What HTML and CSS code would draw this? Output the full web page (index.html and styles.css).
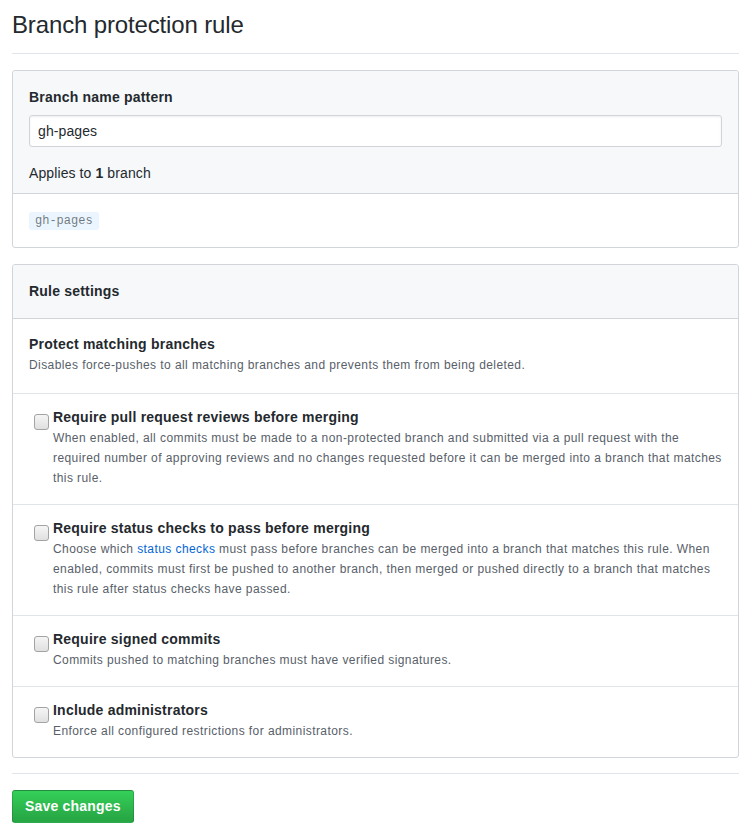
FILE: index.html
```html
<!DOCTYPE html>
<html>
<head>
<meta charset="utf-8">
<link rel="stylesheet" href="styles.css">
</head>
<body>
<div class="page">
  <div class="subhead"><h2 class="subhead-heading">Branch protection rule</h2></div>

  <div class="box">
    <div class="box-header pattern-header">
      <div class="label">Branch name pattern</div>
      <input class="input" type="text" value="gh-pages">
      <div class="applies">Applies to <strong>1</strong> branch</div>
    </div>
    <div class="box-body">
      <span class="branch-name">gh-pages</span>
    </div>
  </div>

  <div class="box rules">
    <div class="box-header"><div class="label">Rule settings</div></div>
    <div class="row row-plain">
      <div class="title">Protect matching branches</div>
      <div class="note">Disables force-pushes to all matching branches and prevents them from being deleted.</div>
    </div>
    <div class="row">
      <label class="check">
        <input type="checkbox" class="cb">
        <span class="check-text">
          <span class="title">Require pull request reviews before merging</span>
          <span class="note">When enabled, all commits must be made to a non-protected branch and submitted via a pull request with the required number of approving reviews and no changes requested before it can be merged into a branch that matches this rule.</span>
        </span>
      </label>
    </div>
    <div class="row">
      <label class="check">
        <input type="checkbox" class="cb">
        <span class="check-text">
          <span class="title">Require status checks to pass before merging</span>
          <span class="note">Choose which <a href="#" class="link">status checks</a> must pass before branches can be merged into a branch that matches this rule. When enabled, commits must first be pushed to another branch, then merged or pushed directly to a branch that matches this rule after status checks have passed.</span>
        </span>
      </label>
    </div>
    <div class="row">
      <label class="check">
        <input type="checkbox" class="cb">
        <span class="check-text">
          <span class="title">Require signed commits</span>
          <span class="note">Commits pushed to matching branches must have verified signatures.</span>
        </span>
      </label>
    </div>
    <div class="row">
      <label class="check">
        <input type="checkbox" class="cb">
        <span class="check-text">
          <span class="title">Include administrators</span>
          <span class="note">Enforce all configured restrictions for administrators.</span>
        </span>
      </label>
    </div>
  </div>

  <hr class="divider">
  <button class="btn-primary" type="button">Save changes</button>
</div>
</body>
</html>
```

FILE: styles.css
```css
* { box-sizing: border-box; }
html, body { margin: 0; padding: 0; background: #fff; }
body {
  font-family: "Liberation Sans", Arial, sans-serif;
  font-size: 14px;
  line-height: 1.5;
  color: #24292e;
  letter-spacing: 0.1px;
}
.page {
  padding: 7px 17px 0 12px;
}
.subhead {
  padding-bottom: 10px;
  margin-bottom: 16px;
  border-bottom: 1px solid #e1e4e8;
}
.subhead-heading {
  margin: 0;
  font-size: 24px;
  font-weight: normal;
  line-height: 36px;
  letter-spacing: -0.14px;
}
.box {
  border: 1px solid #d1d5da;
  border-radius: 3px;
  background: #fff;
}
.box-header {
  background: #f6f8fa;
  border-bottom: 1px solid #d1d5da;
  border-radius: 3px 3px 0 0;
  padding: 16px;
}
.pattern-header {
  padding-bottom: 9px;
}
.label {
  font-weight: bold;
  line-height: 21px;
  letter-spacing: 0.2px;
}
.input {
  display: block;
  width: 100%;
  margin: 7px 0 16px;
  height: 32px;
  padding: 6px 8px;
  font-family: "Liberation Sans", Arial, sans-serif;
  font-size: 14px;
  line-height: 20px;
  letter-spacing: 0.1px;
  color: #24292e;
  background: #fff;
  border: 1px solid #d1d5da;
  border-radius: 3px;
  box-shadow: inset 0 1px 2px rgba(27, 31, 35, 0.075);
  outline: none;
}
.applies { line-height: 21px; }
.box-body {
  padding: 16px;
  line-height: 21px;
}
.branch-name {
  display: inline-block;
  padding: 2px 6px;
  font-family: "Liberation Mono", "DejaVu Sans Mono", monospace;
  font-size: 12px;
  line-height: 14px;
  letter-spacing: 0;
  color: rgba(27, 31, 35, 0.6);
  background: #eaf5ff;
  border-radius: 3px;
  vertical-align: middle;
}
.rules { margin-top: 16px; }
.row {
  padding: 13px 16px 16px;
  border-bottom: 1px solid #e1e4e8;
}
.row:last-child { border-bottom: 0; }
.row-plain { padding: 15px 16px 18px; }
.title {
  display: block;
  font-weight: bold;
  line-height: 21px;
  letter-spacing: 0.22px;
}
.note {
  display: block;
  font-size: 12px;
  line-height: 20px;
  letter-spacing: 0.42px;
  color: #586069;
}
.check {
  display: flex;
  align-items: flex-start;
}
.cb {
  -webkit-appearance: none;
  appearance: none;
  flex: none;
  width: 15px;
  height: 16px;
  margin: 7px 4px 0 5px;
  border: 1px solid #a3a3a3;
  border-radius: 3px;
  background: linear-gradient(#f5f5f5, #e0e0e0);
}
.check-text { display: block; }
.link { color: #0366d6; text-decoration: none; }
.divider {
  margin: 15px 0 16px;
  height: 0;
  border: 0;
  border-top: 1px solid #e1e4e8;
}
.btn-primary {
  display: inline-block;
  padding: 5px 12px;
  font-family: "Liberation Sans", Arial, sans-serif;
  font-size: 14px;
  font-weight: bold;
  line-height: 21px;
  letter-spacing: 0.2px;
  color: #fff;
  background: linear-gradient(-180deg, #34d058 0%, #28a745 90%);
  border: 1px solid rgba(27, 31, 35, 0.2);
  border-radius: 3px;
}
```
